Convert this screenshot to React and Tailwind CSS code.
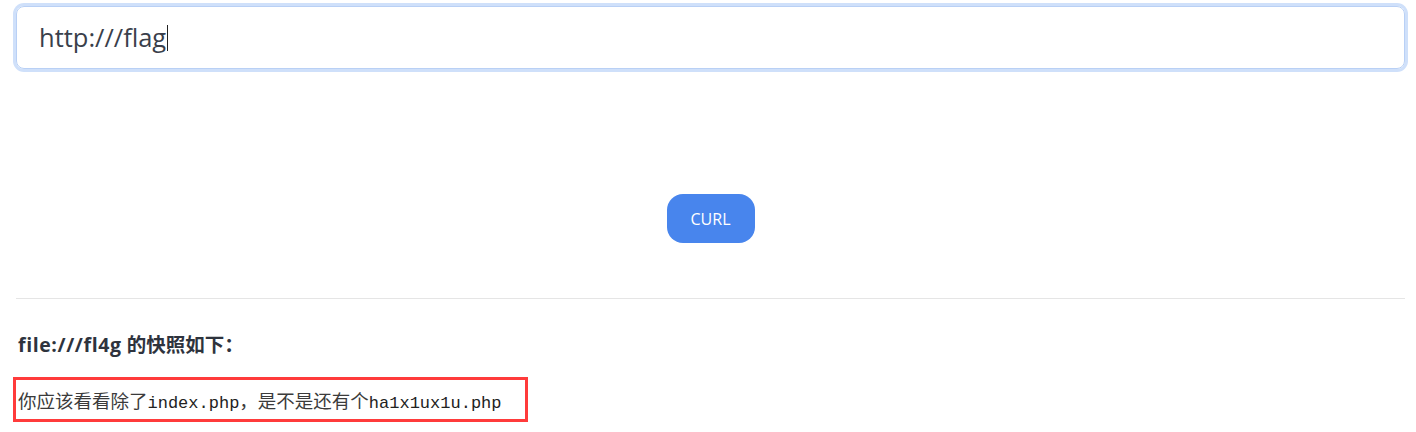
import React from 'react';

const App = () => {
  return (
    <div className="min-h-screen bg-white pl-4 pr-[11px] pt-[6px]" style={{ fontFamily: '"Open Sans", "Noto Sans CJK SC", sans-serif' }}>
      <div className="h-[63px] rounded-[8px] border border-[#b9d0f5] ring-[3px] ring-[#cfe0fa] flex items-center pl-[22px]">
        <span className="text-[25.5px] text-[#3a3f4b] leading-none">http:///flag</span>
        <span className="ml-[1px] inline-block w-px h-[26px] bg-[#222]"></span>
      </div>

      <div className="flex justify-center mt-[125px]">
        <button className="w-[88px] h-[49px] rounded-[16px] bg-[#4885ed] text-white text-[16px]">
          CURL
        </button>
      </div>

      <hr className="mt-[55px] border-0 border-t border-[#e5e5e5]" />

      <h3 className="mt-[34px] ml-[2px] text-[19.5px] font-bold text-[#2e333d] leading-[24px]">
        <span className="tracking-[0.6px]">file:///fl4g</span> 的快照如下：
      </h3>

      <div className="mt-[20px] -ml-[3px] w-[515px] h-[45px] border-[3px] border-[#ff3b3b] flex items-center pl-[2px] pt-[4px]">
        <p className="text-[18.5px] text-[#3b3b3b] leading-none whitespace-nowrap" style={{ fontFamily: '"Noto Sans CJK SC", sans-serif' }}>
          你应该看看除了
          <span className="text-[17px] font-['Liberation_Mono',monospace] text-[#222]">index.php</span>
          ，是不是还有个
          <span className="text-[17px] font-['Liberation_Mono',monospace] text-[#222]">ha1x1ux1u.php</span>
        </p>
      </div>
    </div>
  );
};

export default App;
